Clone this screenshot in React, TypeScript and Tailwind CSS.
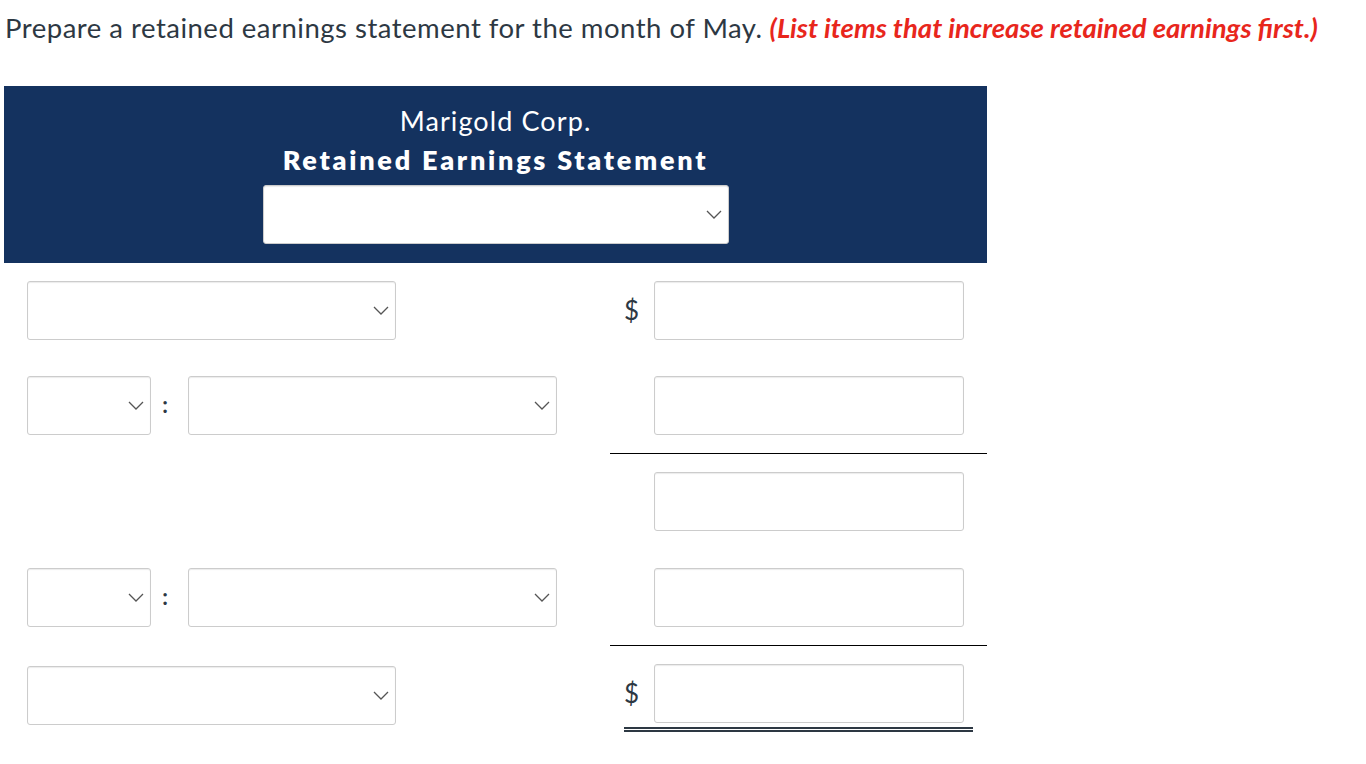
import React from 'react';

const Chevron = () => (
    <svg width="16" height="9" viewBox="0 0 16 9" fill="none">
        <path d="M1 1l7 7 7-7" stroke="#555" strokeWidth="1.3" />
    </svg>
);

const Select = ({ w }: { w: string }) => (
    <div
        className={`${w} h-[59px] shrink-0 bg-white border border-[#ccc] rounded-[3px] shadow-[inset_0_1px_1px_rgba(0,0,0,0.08)] flex items-center justify-end pr-[6px]`}
    >
        <Chevron />
    </div>
);

const Input = () => (
    <div className="ml-[44px] w-[310px] h-[59px] bg-white border border-[#ccc] rounded-[3px] shadow-[inset_0_1px_1px_rgba(0,0,0,0.08)]" />
);

const Amount = ({ dollar, line, double }: { dollar?: boolean; line?: boolean; double?: boolean }) => (
    <div className="w-[377px] flex flex-col">
        <div className="flex relative">
            {dollar && (
                <span className="absolute left-0 w-[44px] h-[59px] flex items-center justify-end pr-[15px] text-[26px]">$</span>
            )}
            <Input />
        </div>
        {line && <div className="mt-[18px] h-px bg-black" />}
        {double && <div className="mt-[4px] ml-[14px] w-[349px] h-[5px] border-t-2 border-b-2 border-[#2d3843]" />}
    </div>
);

const Label = ({ split }: { split?: boolean }) =>
    split ? (
        <div className="flex items-center">
            <Select w="w-[124px]" />
            <span className="w-[37px] pr-[9px] text-center text-[22px] font-bold leading-none pb-[2px]">:</span>
            <Select w="w-[369px]" />
        </div>
    ) : (
        <Select w="w-[369px]" />
    );

const App = () => {
    return (
        <div className="min-h-[764px] bg-white text-[#2d3843] font-['Lato','Liberation_Sans',sans-serif] pt-[8px]">
            <p className="pl-[5px] text-[27.5px] leading-[39px]">
                <span className="tracking-[0.5px]">Prepare a retained earnings statement for the month of May.</span>{' '}
                <span className="text-[#e8261c] font-bold italic">(List items that increase retained earnings first.)</span>
            </p>

            <div className="ml-[4px] mt-[39px] w-[983px]">
                <div className="h-[177px] bg-[#14325f] pt-[15px] flex flex-col items-center text-white">
                    <div className="text-[27px] leading-[39px] tracking-[1.1px]">Marigold Corp.</div>
                    <div className="text-[27px] leading-[39px] font-extrabold tracking-[2.75px]">Retained Earnings Statement</div>
                    <div className="mt-[6px]">
                        <Select w="w-[466px]" />
                    </div>
                </div>

                <div className="pt-[18px] flex flex-col">
                    <div className="h-[95px] flex items-start">
                        <div className="w-[606px] pl-[23px]"><Label /></div>
                        <Amount dollar />
                    </div>
                    <div className="h-[96px] flex items-start">
                        <div className="w-[606px] pl-[23px]"><Label split /></div>
                        <Amount line />
                    </div>
                    <div className="h-[96px] flex items-start">
                        <div className="w-[606px]" />
                        <Amount />
                    </div>
                    <div className="h-[96px] flex items-start">
                        <div className="w-[606px] pl-[23px]"><Label split /></div>
                        <Amount line />
                    </div>
                    <div className="h-[96px] flex items-start">
                        <div className="w-[606px] pl-[23px] pt-[2px]"><Label /></div>
                        <Amount dollar double />
                    </div>
                </div>
            </div>
        </div>
    );
};

export default App;
